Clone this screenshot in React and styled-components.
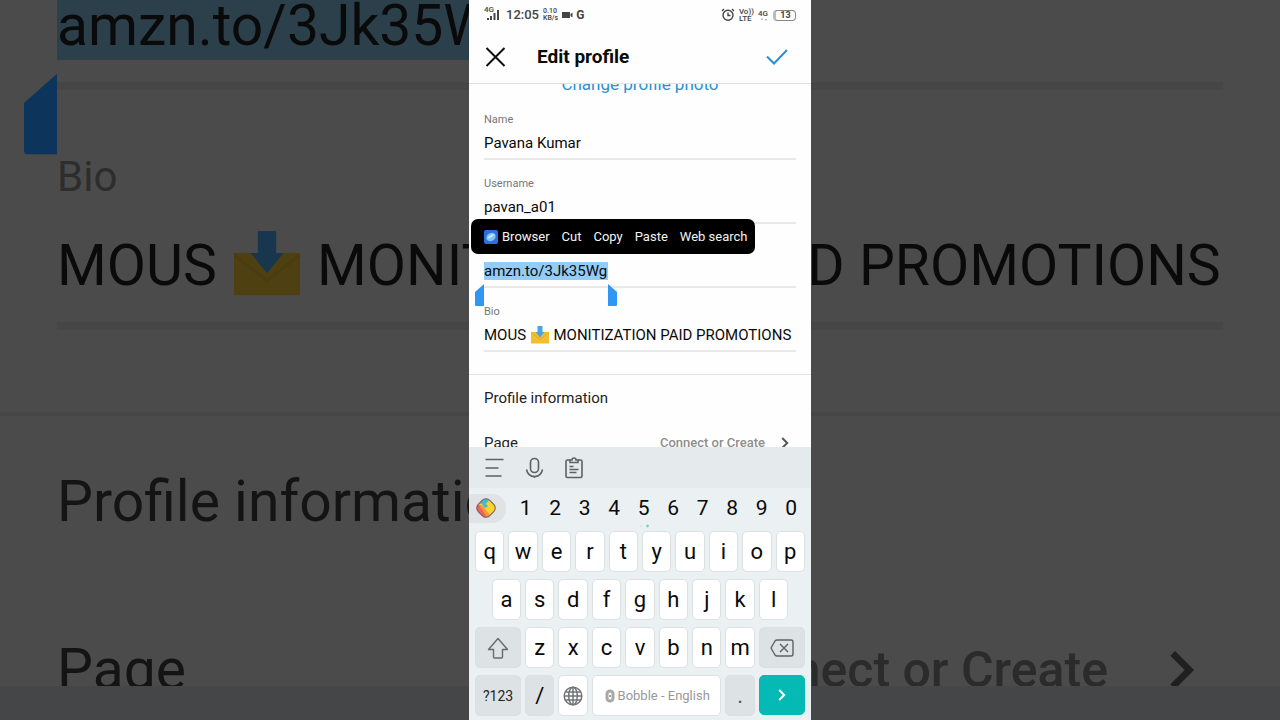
import styled, { createGlobalStyle } from "styled-components";

const GlobalStyle = createGlobalStyle`
  * {
    box-sizing: border-box;
  }
  body {
    margin: 0;
    background: #4b4b4b;
    font-family: Roboto, "Noto Sans", sans-serif;
  }
  button,
  input {
    margin: 0;
    padding: 0;
    border: 0;
    background: none;
    color: inherit;
    font: inherit;
  }
`;

// the phone and the enlarged backdrop share one grid cell
const Stage = styled.div`
  display: grid;
  grid-template-columns: minmax(0, 1fr);
  grid-template-rows: 100vh;
  justify-items: center;
  overflow: hidden;

  & > * {
    grid-area: 1 / 1;
  }
`;

/* ---------- backdrop ---------- */

const Backdrop = styled.div`
  display: flex;
  flex-direction: column;
  width: 100%;
  min-height: 0;
  background: #4b4b4b;
  color: #0a0a0a;
  font-size: 57px;
  line-height: 68px;
  white-space: nowrap;
`;

const BackdropSheet = styled.div`
  flex: 1;
  min-height: 0;
  overflow: hidden;
`;

const BackdropField = styled.div`
  margin: ${({ $top }) => $top}px 57px 0;
  padding-bottom: 22px;
  border-bottom: 8px solid #464646;
`;

const BackdropSelection = styled.span`
  position: relative;
  display: inline-block;
  background: #2c404c;
`;

const BackdropLabel = styled.div`
  margin-bottom: 30px;
  color: #2d2d2d;
  font-size: 42px;
  line-height: 48px;
`;

const BackdropDivider = styled.div`
  height: 4px;
  margin: 82px 0 52px;
  background: #464646;
`;

const BackdropRow = styled.div`
  display: flex;
  align-items: center;
  margin: 0 84px 100px 57px;
  color: #141414;
`;

const BackdropHint = styled.span`
  margin-left: auto;
  margin-right: 60px;
  color: #2b2b2b;
  font-size: 50px;
  font-weight: 500;
`;

const BackdropKeyboard = styled.div`
  height: 34px;
  background: #454648;
`;

/* ---------- phone ---------- */

const Phone = styled.main`
  z-index: 1;
  display: flex;
  flex-direction: column;
  width: 100%;
  max-width: 342px;
  min-height: 0;
  background: #fefefe;
  color: #0a0a0a;
  font-size: 15px;
  line-height: 20px;
`;

const StatusBar = styled.div`
  display: flex;
  align-items: center;
  height: 30px;
  padding: 0 15px;
  color: #444;
`;

const Clock = styled.span`
  margin: 0 4px 0 6px;
  font-size: 13px;
  font-weight: 500;
`;

const Stack = styled.span`
  display: flex;
  flex-direction: column;
  font-size: ${({ $size }) => $size || 7}px;
  font-weight: 500;
  line-height: 7px;
`;

const GoogleMark = styled.span`
  margin-left: 3px;
  font-size: 12px;
  font-weight: 700;
`;

const StatusRight = styled.div`
  display: flex;
  align-items: center;
  gap: 4px;
  margin-left: auto;
`;

const Battery = styled.span`
  width: 23px;
  border: 1px solid #888;
  border-left: 3px solid #bbb;
  border-radius: 4px;
  font-size: 9px;
  font-weight: 700;
  line-height: 9px;
  text-align: center;
`;

const Header = styled.header`
  display: flex;
  align-items: center;
  height: 54px;
  padding: 0 23px 0 16px;
  border-bottom: 1px solid #e2e2e2;
`;

const IconButton = styled.button`
  display: flex;
  align-items: center;
  justify-content: center;
`;

const Title = styled.h1`
  flex: 1;
  margin: 0 0 0 31px;
  font-size: 19px;
  font-weight: 700;
`;

const Content = styled.div`
  flex: 1;
  min-height: 0;
  overflow: hidden;
`;

const PhotoLink = styled.a`
  display: block;
  height: 22px;
  margin-top: -10px;
  color: #2a92cf;
  font-size: 17px;
  text-align: center;
  text-decoration: none;
`;

const Field = styled.div`
  position: relative;
  display: flex;
  flex-direction: column;
  align-items: flex-start;
  gap: 5px;
  height: 64px;
  margin: 0 15px;
  padding-top: 16px;
  border-bottom: 2px solid #e9e9e9;
`;

const Label = styled.label`
  color: #777;
  font-size: 11px;
  line-height: 16px;
`;

const Input = styled.input`
  width: 100%;
  height: 20px;
  outline: 0;
`;

const SelectedInput = styled(Input)`
  width: 124px;
  height: 18px;
  margin-top: 1px;
  background: #93ccf7;
`;

const RichInput = styled.div`
  width: 100%;
  white-space: nowrap;
`;

const Handle = styled.svg`
  position: absolute;
  top: ${({ $top }) => $top};
  left: ${({ $left }) => $left};
`;

const ContextMenu = styled.div`
  position: absolute;
  z-index: 2;
  top: -5px;
  left: -13px;
  display: flex;
  align-items: center;
  gap: 12px;
  height: 35px;
  padding: 0 8px 0 13px;
  border-radius: 7px;
  background: #000;
  color: #f4f4f4;
  font-size: 13px;
  white-space: nowrap;
`;

const MenuItem = styled.button`
  display: flex;
  align-items: center;
  gap: 4px;
`;

const Section = styled.section`
  margin-top: 22px;
  padding: 13px 22px 0 15px;
  border-top: 1px solid #e4e4e4;
  color: #222;
`;

const SectionTitle = styled.h2`
  margin: 0 0 25px;
  font-size: 15px;
  font-weight: 400;
`;

const PageLink = styled.a`
  display: flex;
  align-items: center;
  color: inherit;
  text-decoration: none;
`;

const PageHint = styled.span`
  margin-left: auto;
  margin-right: 16px;
  color: #8e8e8e;
  font-size: 13px;
  font-weight: 500;
`;

/* ---------- keyboard ---------- */

const Keyboard = styled.div`
  background: #ebf0f3;
  color: #0a0a0a;
`;

const Tools = styled.div`
  display: flex;
  align-items: center;
  gap: 20px;
  height: 41px;
  padding: 0 15px;
  background: #e5eaed;
`;

const NumberRow = styled.div`
  position: relative;
  display: flex;
  align-items: center;
  height: 40px;
  padding-right: 5px;
`;

const StickerButton = styled(IconButton)`
  width: 37px;
  height: 29px;
  margin-right: 5px;
  padding-right: 3px;
  border-radius: 0 14px 14px 0;
  background: #dfe3e6;
`;

const NumberKey = styled.button`
  flex: 1;
  font-size: 21px;
`;

const Dots = styled.svg`
  position: absolute;
  bottom: 0;
  left: 170px;
`;

const Keys = styled.div`
  display: grid;
  grid-template-columns: repeat(20, minmax(0, 1fr));
  gap: 7px 4px;
  padding: 3px 6px 4px;
`;

const backgrounds = { light: "#fff", dark: "#dde2e5", go: "#05b9b5" };

const Key = styled.button`
  display: flex;
  align-items: center;
  justify-content: center;
  gap: 2px;
  grid-column: ${({ $start }) => $start || "auto"} / span ${({ $span }) => $span || 2};
  height: 41px;
  border: 1px solid ${({ $tone }) => ($tone === "go" ? "#05b9b5" : "#dbe0e3")};
  border-radius: 5px;
  background: ${({ $tone }) => backgrounds[$tone || "light"]};
  color: ${({ $color }) => $color || "#0a0a0a"};
  font-size: ${({ $size }) => $size || 22}px;
`;

const GoKey = styled(Key)`
  height: 40px;
`;

const InboxIcon = ({ size, dim, gap }) => (
  <svg
    width={size}
    height={size}
    viewBox="0 0 18 18"
    style={{ verticalAlign: "-18%", margin: `0 ${gap}px` }}
    role="img"
    aria-label="inbox"
  >
    <path d="M0 6h18v11.500h-18z" fill={dim ? "#4f4011" : "#f3bf2d"} />
    <path d="M0 6l9 7 9-7v1l-9 7-9-7z" fill={dim ? "#4a3c10" : "#e2ad24"} />
    <path d="M6.500 0h5v6h2l-4.500 5.500-4.500-5.500h2z" fill={dim ? "#18374e" : "#4ca4dc"} />
  </svg>
);

const Chevron = ({ width, height, color, stroke = 2 }) => (
  <svg width={width} height={height} viewBox="0 0 8 12" fill="none" stroke={color} strokeWidth={stroke}>
    <path d="M1.200 1l5 5-5 5" />
  </svg>
);

const BackgroundCopy = () => (
  <Backdrop aria-hidden="true">
    <BackdropSheet>
      <BackdropField $top={-8}>
        <BackdropSelection>
          amzn.to/3Jk35Wg
          <Handle $top="81px" $left="-33px" width="33" height="82" viewBox="0 0 9 22">
            <path d="M9 0v22h-8q-1 0-1-1v-13z" fill="#0d355b" />
          </Handle>
        </BackdropSelection>
      </BackdropField>
      <BackdropField $top={63}>
        <BackdropLabel>Bio</BackdropLabel>
        MOUS <InboxIcon size={66} gap={3} dim /> MONITIZATION PAID PROMOTIONS
      </BackdropField>
      <BackdropDivider />
      <BackdropRow>Profile information</BackdropRow>
      <BackdropRow>
        Page
        <BackdropHint>Connect or Create</BackdropHint>
        <Chevron width={28} height={40} color="#202020" />
      </BackdropRow>
    </BackdropSheet>
    <BackdropKeyboard />
  </Backdrop>
);

const Status = () => (
  <StatusBar>
    <svg width="16" height="18" viewBox="0 0 16 18" fill="#444">
      <text x="0" y="6" fontSize="8" fontWeight="500">4G</text>
      <path d="M3 12h2v2h-2zM6 10h2v4h-2zM9.500 7h2v7h-2zM13 4h2v10h-2z" />
    </svg>
    <Clock>12:05</Clock>
    <Stack>
      <span>0.10</span>
      <span>KB/s</span>
    </Stack>
    <svg width="11" height="8" viewBox="0 0 11 8" fill="#444" style={{ marginLeft: 4 }}>
      <path d="M0 1h8v6h-8zM8.500 3l2-1.500v5l-2-1.500z" />
    </svg>
    <GoogleMark>G</GoogleMark>
    <StatusRight>
      <svg width="14" height="14" viewBox="0 0 14 14" fill="none" stroke="#444" strokeWidth="1.400">
        <circle cx="7" cy="7.300" r="5" />
        <path d="M7 4.500v3h2.500M1 3l2-2M13 3l-2-2" />
      </svg>
      <Stack $size={8}>
        <span>Vo))</span>
        <span>LTE</span>
      </Stack>
      <svg width="11" height="15" viewBox="0 0 11 15" fill="#444">
        <text x="0" y="8" fontSize="8" fontWeight="500">4G</text>
        <path d="M3 11l1-1 1 1v1h-2zM7 11h2v1l-1 1-1-1z" fill="#bbb" />
      </svg>
      <Battery>13</Battery>
    </StatusRight>
  </StatusBar>
);

const EditForm = () => (
  <Content>
    <PhotoLink href="#photo">Change profile photo</PhotoLink>
    <Field>
      <Label htmlFor="name">Name</Label>
      <Input id="name" defaultValue="Pavana Kumar" />
    </Field>
    <Field>
      <Label htmlFor="username">Username</Label>
      <Input id="username" defaultValue="pavan_a01" />
    </Field>
    <Field>
      <Label htmlFor="website">Website</Label>
      <SelectedInput id="website" defaultValue="amzn.to/3Jk35Wg" />
      <Handle $top="60px" $left="-9px" width="9" height="22" viewBox="0 0 9 22">
        <path d="M9 0v22h-8q-1 0-1-1v-13z" fill="#2f96f3" />
      </Handle>
      <Handle $top="60px" $left="124px" width="9" height="22" viewBox="0 0 9 22">
        <path d="M0 0v22h8q1 0 1-1v-13z" fill="#2f96f3" />
      </Handle>
      <ContextMenu>
        <MenuItem>
          <svg width="14" height="14" viewBox="0 0 14 14">
            <rect width="14" height="14" rx="2" fill="#2d6fe0" />
            <ellipse cx="7" cy="7" rx="5" ry="4" transform="rotate(-35 7 7)" fill="#7fc4f3" />
            <path d="M3 9q5-1 8-5-4 0-6 2z" fill="#c9e8fb" />
          </svg>
          Browser
        </MenuItem>
        <MenuItem>Cut</MenuItem>
        <MenuItem>Copy</MenuItem>
        <MenuItem>Paste</MenuItem>
        <MenuItem>Web search</MenuItem>
      </ContextMenu>
    </Field>
    <Field>
      <Label as="span" id="bio-label">Bio</Label>
      <RichInput role="textbox" aria-labelledby="bio-label" tabIndex={0}>
        MOUS <InboxIcon size={18} gap={1} /> MONITIZATION PAID PROMOTIONS
      </RichInput>
    </Field>
    <Section>
      <SectionTitle>Profile information</SectionTitle>
      <PageLink href="#page">
        Page
        <PageHint>Connect or Create</PageHint>
        <Chevron width={8} height={12} color="#555" />
      </PageLink>
    </Section>
  </Content>
);

const BobbleKeyboard = () => (
  <Keyboard>
    <Tools>
      <IconButton aria-label="Menu">
        <svg width="20" height="20" viewBox="0 0 20 20" stroke="#5d6265" strokeWidth="1.700">
          <path d="M1.500 1.500h18M1.500 10h13M1.500 18h16" />
        </svg>
      </IconButton>
      <IconButton aria-label="Voice typing">
        <svg width="20" height="22" viewBox="0 0 20 22" fill="none" stroke="#5d6265" strokeWidth="1.600">
          <rect x="6.500" y="1.500" width="8" height="14" rx="4" />
          <path d="M2.500 12.500q1.500 7 8 7t8-7M10.500 19.500v1.500" />
        </svg>
      </IconButton>
      <IconButton aria-label="Clipboard">
        <svg width="20" height="22" viewBox="0 0 20 22" fill="none" stroke="#5d6265" strokeWidth="1.600">
          <path d="M6 3h-2.500q-1.500 0-1.500 1.500v14.500q0 1.500 1.500 1.500h13q1.500 0 1.500-1.500v-14.500q0-1.500-1.500-1.500h-2.500" />
          <path d="M6 5.500v-2.500h2q0-2 2-2t2 2h2v2.500zM5.500 9.500h4M5.500 12.500h9M5.500 15.500h7" />
        </svg>
      </IconButton>
    </Tools>
    <NumberRow>
      <StickerButton aria-label="Stickers">
        <svg width="22" height="22" viewBox="0 0 22 22">
          <defs>
            <clipPath id="gem">
              <rect x="3" y="3" width="16" height="16" rx="5" transform="rotate(45 11 11)" />
            </clipPath>
          </defs>
          <g clipPath="url(#gem)">
            <path d="M0 0h22v22h-22z" fill="#fbd32a" />
            <path d="M0 7l7 1 11 14h-18z" fill="#f4993a" />
            <path d="M0 8h4l9 14h-13z" fill="#ee5f62" />
            <path d="M3 6l8-7 3 4-3 4 2 2q-2 3-4 1l-2-3z" fill="#45b8dc" />
          </g>
          <rect x="3" y="3" width="16" height="16" rx="5" transform="rotate(45 11 11)" fill="none" stroke="#7a5a5c" />
        </svg>
      </StickerButton>
      {[..."1234567890"].map((n) => (
        <NumberKey key={n}>{n}</NumberKey>
      ))}
      <Dots width="12" height="4" viewBox="0 0 12 4">
        <circle cx="1.500" cy="2" r="1" fill="#c5e8e2" />
        <circle cx="8.500" cy="2" r="1.400" fill="#7bd3c2" />
      </Dots>
    </NumberRow>
    <Keys>
      {[..."qwertyuiop"].map((k) => (
        <Key key={k}>{k}</Key>
      ))}
      {[..."asdfghjkl"].map((k, i) => (
        <Key key={k} $start={i * 2 + 2}>{k}</Key>
      ))}
      <Key $start={1} $span={3} $tone="dark" aria-label="Shift">
        <svg width="22" height="22" viewBox="0 0 22 22" fill="none" stroke="#666b6e" strokeWidth="1.400" strokeLinejoin="round">
          <path d="M11 1.500l9.500 11h-5v7.500q0 1-1 1h-7q-1 0-1-1v-7.500h-5z" />
        </svg>
      </Key>
      {[..."zxcvbnm"].map((k) => (
        <Key key={k}>{k}</Key>
      ))}
      <Key $span={3} $tone="dark" aria-label="Backspace">
        <svg width="24" height="18" viewBox="0 0 24 18" fill="none" stroke="#5d6265" strokeWidth="1.400" strokeLinejoin="round">
          <path d="M7 1h14q2 0 2 2v12q0 2-2 2h-14q-1 0-2-1l-4-7 4-7q1-1 2-1zM10 5l8 8M18 5l-8 8" />
        </svg>
      </Key>
      <Key $span={3} $tone="dark" $size={14} $color="#222">?123</Key>
      <Key $tone="dark">/</Key>
      <Key aria-label="Language">
        <svg width="20" height="20" viewBox="0 0 20 20" fill="none" stroke="#707476" strokeWidth="1.500">
          <circle cx="10" cy="10" r="8.800" />
          <ellipse cx="10" cy="10" rx="4.300" ry="8.800" />
          <path d="M10 1v18M2.500 6h15M1 10h18M2.500 14h15" />
        </svg>
      </Key>
      <Key $span={8} $size={13} $color="#999">
        <svg width="12" height="14" viewBox="0 0 12 14" fill="none" stroke="#a8a8a8" strokeWidth="3">
          <rect x="3" y="2" width="6" height="10" rx="3" />
          <path d="M5 7h2" strokeWidth="2" />
        </svg>
        Bobble - English
      </Key>
      <Key $tone="dark" $color="#555">.</Key>
      <GoKey $span={3} $tone="go" aria-label="Enter">
        <Chevron width={8} height={12} color="#fff" />
      </GoKey>
    </Keys>
  </Keyboard>
);

function App() {
  return (
    <>
      <GlobalStyle />
      <Stage>
        <BackgroundCopy />
        <Phone>
          <Status />
          <Header>
            <IconButton aria-label="Close">
              <svg width="21" height="21" viewBox="0 0 21 21" stroke="#111" strokeWidth="2">
                <path d="M1.500 2l18 18M19.500 2l-18 18" />
              </svg>
            </IconButton>
            <Title>Edit profile</Title>
            <IconButton aria-label="Save">
              <svg width="22" height="16" viewBox="0 0 22 16" fill="none" stroke="#2a8fd0" strokeWidth="2">
                <path d="M1 7.500l7 7 13-13.500" />
              </svg>
            </IconButton>
          </Header>
          <EditForm />
          <BobbleKeyboard />
        </Phone>
      </Stage>
    </>
  );
}

export default App;
